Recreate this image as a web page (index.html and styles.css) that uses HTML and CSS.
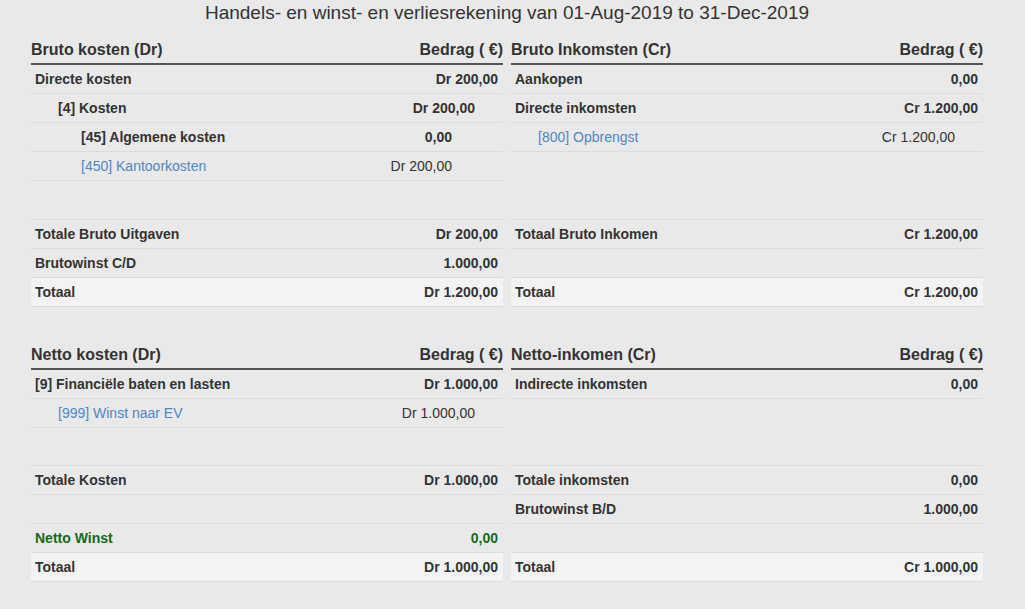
FILE: index.html
```html
<!DOCTYPE html>
<html lang="nl">
<head>
<meta charset="utf-8">
<title>Handels- en winst- en verliesrekening</title>
<link rel="stylesheet" href="styles.css">
</head>
<body>
<main class="report">
  <h1 class="title">Handels- en winst- en verliesrekening van 01-Aug-2019 to 31-Dec-2019</h1>

  <section class="section">
    <div class="cols">
      <div class="col">
        <div class="head"><span>Bruto kosten (Dr)</span><span>Bedrag ( €)</span></div>
        <div class="row"><span>Directe kosten</span><span>Dr 200,00</span></div>
        <div class="row l1"><span>[4] Kosten</span><span>Dr 200,00</span></div>
        <div class="row l2"><span>[45] Algemene kosten</span><span>0,00</span></div>
        <div class="row l2 acc"><a href="#">[450] Kantoorkosten</a><span>Dr 200,00</span></div>
      </div>
      <div class="col">
        <div class="head"><span>Bruto Inkomsten (Cr)</span><span>Bedrag ( €)</span></div>
        <div class="row"><span>Aankopen</span><span>0,00</span></div>
        <div class="row"><span>Directe inkomsten</span><span>Cr 1.200,00</span></div>
        <div class="row l1 acc"><a href="#">[800] Opbrengst</a><span>Cr 1.200,00</span></div>
      </div>
    </div>
    <div class="cols totals">
      <div class="col">
        <div class="row"><span>Totale Bruto Uitgaven</span><span>Dr 200,00</span></div>
        <div class="row"><span>Brutowinst C/D</span><span>1.000,00</span></div>
        <div class="row total"><span>Totaal</span><span>Dr 1.200,00</span></div>
      </div>
      <div class="col">
        <div class="row"><span>Totaal Bruto Inkomen</span><span>Cr 1.200,00</span></div>
        <div class="row empty"></div>
        <div class="row total"><span>Totaal</span><span>Cr 1.200,00</span></div>
      </div>
    </div>
  </section>

  <section class="section">
    <div class="cols">
      <div class="col">
        <div class="head"><span>Netto kosten (Dr)</span><span>Bedrag ( €)</span></div>
        <div class="row"><span>[9] Financiële baten en lasten</span><span>Dr 1.000,00</span></div>
        <div class="row l1 acc"><a href="#">[999] Winst naar EV</a><span>Dr 1.000,00</span></div>
      </div>
      <div class="col">
        <div class="head"><span>Netto-inkomen (Cr)</span><span>Bedrag ( €)</span></div>
        <div class="row"><span>Indirecte inkomsten</span><span>0,00</span></div>
      </div>
    </div>
    <div class="cols totals">
      <div class="col">
        <div class="row"><span>Totale Kosten</span><span>Dr 1.000,00</span></div>
        <div class="row empty"></div>
        <div class="row profit"><span>Netto Winst</span><span>0,00</span></div>
        <div class="row total"><span>Totaal</span><span>Dr 1.000,00</span></div>
      </div>
      <div class="col">
        <div class="row"><span>Totale inkomsten</span><span>0,00</span></div>
        <div class="row"><span>Brutowinst B/D</span><span>1.000,00</span></div>
        <div class="row empty"></div>
        <div class="row total"><span>Totaal</span><span>Cr 1.000,00</span></div>
      </div>
    </div>
  </section>
</main>
</body>
</html>
```

FILE: styles.css
```css
html, body {
  margin: 0;
  padding: 0;
  background: #e9e9e9;
}

body {
  font-family: "Liberation Sans", Arial, sans-serif;
  color: #333;
}

.report {
  width: 952px;
  margin-left: 31px;
}

.title {
  margin: 0;
  font-size: 19px;
  font-weight: normal;
  line-height: 26px;
  text-align: center;
  color: #333;
}

.section + .section {
  margin-top: 24px;
}

.cols {
  display: grid;
  grid-template-columns: 1fr 1fr;
  column-gap: 8px;
  align-items: start;
}

.totals {
  margin-top: 38px;
}

.section + .section .totals {
  margin-top: 37px;
}

.totals .col {
  border-top: 1px solid #dcdcdc;
}

.head {
  display: flex;
  justify-content: space-between;
  padding: 13px 0 2px;
  font-size: 16px;
  font-weight: bold;
  line-height: 22px;
  border-bottom: 2px solid #555;
}

.row {
  display: flex;
  justify-content: space-between;
  height: 28px;
  padding: 0 5px 0 4px;
  font-size: 14px;
  font-weight: bold;
  line-height: 28px;
  border-bottom: 1px solid #dcdcdc;
}

.row.l1 {
  padding: 0 28px 0 27px;
}

.row.l2 {
  padding: 0 51px 0 50px;
}

.row.acc {
  font-weight: normal;
}

.row.acc a {
  color: #4d87c7;
  text-decoration: none;
}

.row.profit {
  color: #176a17;
}

.row.total {
  background: #f3f3f3;
}
```
